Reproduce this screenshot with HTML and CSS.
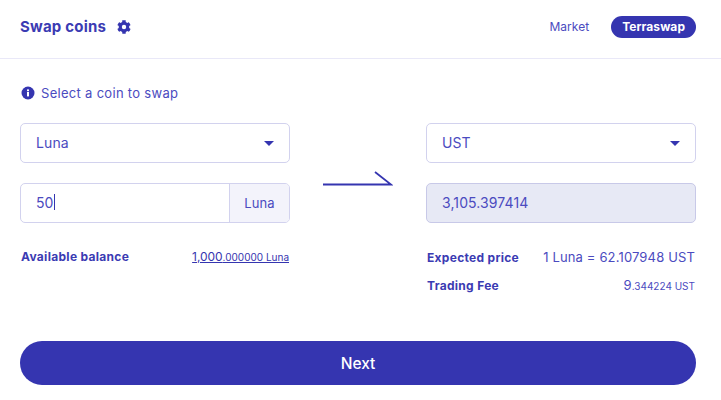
FILE: index.html
```html
<!DOCTYPE html>
<html lang="en">
<head>
<meta charset="utf-8">
<title>Swap coins</title>
<link rel="stylesheet" href="styles.css">
</head>
<body>
<main class="card">
  <header class="head">
    <div class="title-wrap">
      <h1 class="title">Swap coins</h1>
      <svg class="gear" viewBox="0 0 512 512" width="14" height="14"><path fill="#3535b0" d="M487 316l-43-25c4-23 4-47 0-70l43-25c5-3 7-9 6-14-11-36-30-68-55-95-4-4-10-5-15-2l-43 25c-18-15-39-27-61-35V25c0-6-4-11-9-12-37-8-75-8-110 0-6 1-10 6-10 12v50c-22 8-43 20-61 35L87 85c-5-3-11-2-15 2-25 27-44 59-55 95-2 5 1 11 6 14l43 25c-4 23-4 47 0 70l-43 25c-5 3-7 9-6 14 11 36 30 68 55 95 4 4 10 5 15 2l43-25c18 15 39 27 61 35v50c0 6 4 11 10 12 37 8 75 8 110 0 5-1 9-6 9-12v-50c22-8 43-20 61-35l43 25c5 3 11 2 15-2 25-27 44-59 55-95 1-5-1-11-6-14zM256 336a80 80 0 1 1 0-160 80 80 0 0 1 0 160z"/></svg>
    </div>
    <nav class="tabs">
      <span class="tab">Market</span>
      <span class="tab tab-on">Terraswap</span>
    </nav>
  </header>
  <section class="body">
    <p class="hint">
      <svg class="info" viewBox="0 0 14 14" width="14" height="14"><circle cx="7" cy="7" r="6.5" fill="#3535b0"/><rect x="6" y="6" width="2" height="4.4" fill="#fff"/><rect x="6" y="3.4" width="2" height="1.8" fill="#fff"/></svg>
      Select a coin to swap
    </p>
    <div class="swap">
      <div class="col">
        <div class="field select"><span>Luna</span><i class="caret"></i></div>
        <div class="field group"><span class="amount">50<i class="cursor"></i></span><span class="unit">Luna</span></div>
        <div class="rows">
          <div class="row"><b>Available balance</b><u class="val">1,000<small>.000000 Luna</small></u></div>
        </div>
      </div>
      <div class="arrow">
        <svg viewBox="0 0 70 16" width="70" height="16"><path d="M0 14.5H68L52 2" fill="none" stroke="#3535b0" stroke-width="1.8"/></svg>
      </div>
      <div class="col">
        <div class="field select"><span>UST</span><i class="caret"></i></div>
        <div class="field readonly"><span>3,105.397414</span></div>
        <div class="rows">
          <div class="row"><b>Expected price</b><span class="val">1 Luna = 62.107948 UST</span></div>
          <div class="row"><b>Trading Fee</b><span class="val">9<small>.344224 UST</small></span></div>
        </div>
      </div>
    </div>
    <button class="next" type="button">Next</button>
  </section>
</main>
</body>
</html>
```
FILE: styles.css
```css
* { box-sizing: border-box; }
html, body { margin: 0; padding: 0; background: #fff; }
body { width: 721px; height: 400px; overflow: hidden; font-family: Inter, "Liberation Sans", sans-serif; color: #4b4bc0; }
.card { display: flex; flex-direction: column; height: 400px; }
.head { height: 59px; flex: none; border-bottom: 1px solid #e9e8f8; display: flex; align-items: center; justify-content: space-between; padding: 0 25px 5px 20px; }
.title-wrap { display: flex; align-items: center; gap: 11px; }
.title { margin: 0; font-size: 15px; font-weight: 700; letter-spacing: 0.2px; color: #3b3bb3; }
.gear { display: block; }
.tabs { display: flex; align-items: center; gap: 22px; }
.tab { font-size: 12px; line-height: 22px; letter-spacing: 0.05px; }
.tab-on { background: #3535b0; color: #fff; font-weight: 700; border-radius: 11px; padding: 0 11px; }
.body { padding: 0 25px 0 20px; display: flex; flex-direction: column; flex: 1; }
.hint { margin: 25px 0 0 1px; height: 17px; display: flex; align-items: center; gap: 6px; font-size: 13px; letter-spacing: 0.3px; }
.swap { display: flex; align-items: flex-start; margin-top: 22px; height: 218px; }
.col { width: 270px; flex: none; display: flex; flex-direction: column; gap: 20px; }
.arrow { width: 136px; flex: none; display: flex; justify-content: center; padding-top: 47px; }
.field { height: 40px; border: 1px solid #d2d2ee; border-radius: 5px; display: flex; align-items: center; font-size: 14px; padding-bottom: 2px; letter-spacing: 0.1px; }
.select { justify-content: space-between; padding: 0 15px 2px; }
.caret { width: 0; height: 0; border-left: 5px solid transparent; border-right: 5px solid transparent; border-top: 5px solid #3535b0; margin-top: 2px; }
.group { overflow: hidden; padding-bottom: 0; }
.amount { flex: 1; padding: 0 0 2px 15px; display: flex; align-items: center; }
.cursor { width: 1px; height: 16px; background: #3535b0; }
.unit { width: 60px; height: 100%; flex: none; background: #f3f3fb; border-left: 1px solid #d2d2ee; display: flex; align-items: center; justify-content: center; font-size: 13px; }
.readonly { background: #e7e9f5; padding: 0 15px 2px; border-color: #c8c9e8; }
.rows { display: flex; flex-direction: column; gap: 7px; padding-left: 1px; margin-top: 6px; }
.row { display: flex; justify-content: space-between; align-items: baseline; height: 21px; padding-right: 1px; }
.row b { font-size: 12px; font-weight: 700; letter-spacing: 0.3px; color: #3b3bb3; }
.val { font-size: 13px; letter-spacing: 0.15px; }
.row small { font-size: 10px; letter-spacing: 0; }
u.val { color: #3535b0; font-size: 12px; letter-spacing: -0.05px; }
.next { height: 44px; width: 676px; flex: none; border: 0; border-radius: 22px; background: #3535b0; color: #fff; font: 500 15.5px Inter, "Liberation Sans", sans-serif; padding-bottom: 0; }
```
